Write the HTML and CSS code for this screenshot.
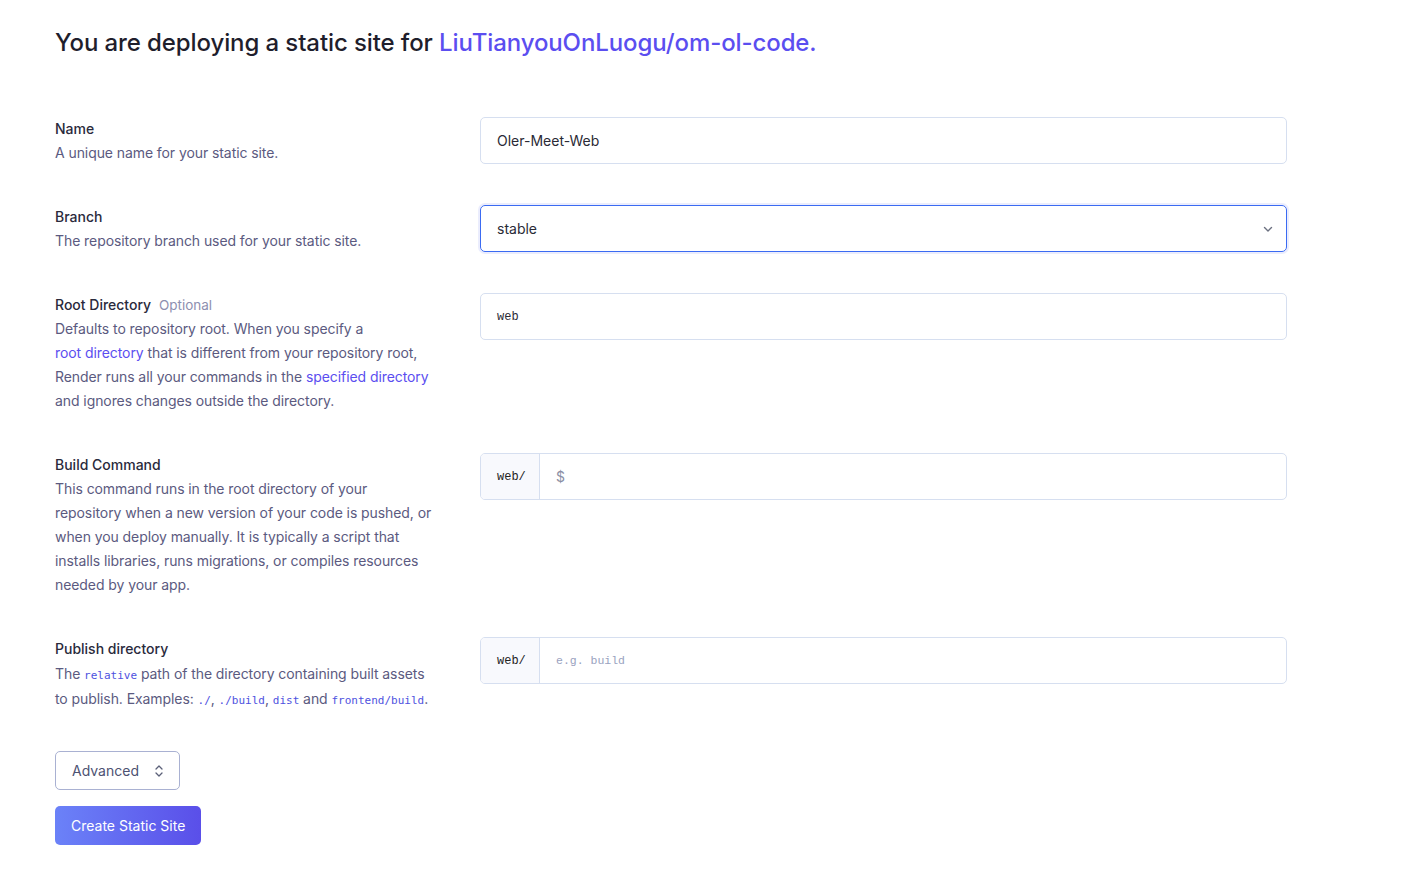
FILE: index.html
```html
<!DOCTYPE html>
<html lang="en">
<head>
<meta charset="utf-8">
<title>Create Static Site</title>
<link rel="stylesheet" href="styles.css">
</head>
<body>
<main class="page">
  <h1 class="title">You are deploying a static site for <a class="repo" href="#">LiuTianyouOnLuogu/om-ol-code.</a></h1>

  <form class="form">
    <div class="row">
      <div class="info">
        <div class="label">Name</div>
        <div class="desc">A unique name for your static site.</div>
      </div>
      <div class="control">
        <div class="input">Oler-Meet-Web</div>
      </div>
    </div>

    <div class="row">
      <div class="info">
        <div class="label">Branch</div>
        <div class="desc">The repository branch used for your static site.</div>
      </div>
      <div class="control">
        <div class="input select">
          <span>stable</span>
          <svg class="chev" width="12" height="12" viewBox="0 0 12 12"><path d="M2.5 4.5 6 8l3.5-3.5" fill="none" stroke="#6b7080" stroke-width="1.4" stroke-linecap="round" stroke-linejoin="round"/></svg>
        </div>
      </div>
    </div>

    <div class="row">
      <div class="info">
        <div class="label">Root Directory <span class="optional">Optional</span></div>
        <div class="desc">Defaults to repository root. When you specify a <a href="#">root directory</a> that is different from your repository root, Render runs all your commands in the <a href="#">specified directory</a> and ignores changes outside the directory.</div>
      </div>
      <div class="control">
        <div class="input mono">web</div>
      </div>
    </div>

    <div class="row">
      <div class="info">
        <div class="label">Build Command</div>
        <div class="desc">This command runs in the root directory of your repository when a new version of your code is pushed, or when you deploy manually. It is typically a script that installs libraries, runs migrations, or compiles resources needed by your app.</div>
      </div>
      <div class="control">
        <div class="group">
          <span class="prefix">web/</span>
          <span class="field dollar">$</span>
        </div>
      </div>
    </div>

    <div class="row">
      <div class="info">
        <div class="label">Publish directory</div>
        <div class="desc publish">The <code>relative</code> path of the directory containing built assets to publish. Examples: <code>./</code>, <code>./build</code>, <code>dist</code> and <code>frontend/build</code>.</div>
      </div>
      <div class="control">
        <div class="group">
          <span class="prefix">web/</span>
          <span class="field placeholder">e.g. build</span>
        </div>
      </div>
    </div>

    <div class="actions">
      <button type="button" class="advanced">Advanced
        <svg width="12" height="16" viewBox="0 0 12 16"><path d="M3 6 6 3l3 3M3 10l3 3 3-3" fill="none" stroke="#5b6078" stroke-width="1.3" stroke-linecap="round" stroke-linejoin="round"/></svg>
      </button>
      <button type="button" class="create">Create Static Site</button>
    </div>
  </form>
</main>
</body>
</html>
```

FILE: styles.css
```css
* { box-sizing: border-box; }
body {
  margin: 0;
  background: #ffffff;
  font-family: Inter, "Noto Sans", sans-serif;
  color: #2a2a3c;
}
.page {
  padding: 27px 55px 40px 55px;
}
.title {
  margin: 0 0 58px 0;
  font-size: 24px;
  font-weight: 500;
  line-height: 32px;
  letter-spacing: -0.1px;
  color: #1f1e2c;
}
.repo {
  color: #5b4ef0;
  text-decoration: none;
}
.form {
  display: flex;
  flex-direction: column;
}
.row {
  display: flex;
  gap: 47px;
  margin-bottom: 40px;
  width: 1232px;
}
.info {
  width: 378px;
  flex: none;
}
.label {
  font-size: 14px;
  line-height: 24px;
  font-weight: 500;
  color: #2a2a3c;
}
.optional {
  font-weight: 400;
  color: #8d8fb0;
  margin-left: 4px;
  font-size: 13.5px;
}
.desc {
  font-size: 14px;
  line-height: 24px;
  letter-spacing: -0.08px;
  color: #5b5a80;
}
.desc.publish {
  line-height: 25px;
}
.desc a {
  color: #5b4ef0;
  text-decoration: none;
  white-space: nowrap;
}
.desc code {
  font-family: "DejaVu Sans Mono", monospace;
  font-size: 11px;
  line-height: 1;
  letter-spacing: 0;
  color: #4e52e0;
}
.control {
  flex: 1;
}
.input {
  height: 47px;
  border: 1px solid #d6dff0;
  border-radius: 5px;
  padding: 0 16px;
  display: flex;
  align-items: center;
  font-size: 14px;
  color: #2a2a36;
}
.select {
  justify-content: space-between;
  border-color: #3b6bf2;
  box-shadow: 0 0 0 2px rgba(90, 110, 240, 0.12);
  padding-right: 12px;
}
.mono {
  font-family: "Liberation Mono", monospace;
  font-size: 12px;
}
.group {
  height: 47px;
  border: 1px solid #d6dff0;
  border-radius: 5px;
  display: flex;
  align-items: stretch;
  overflow: hidden;
}
.prefix {
  width: 59px;
  background: #f8f9fd;
  border-right: 1px solid #d6dff0;
  display: flex;
  align-items: center;
  padding-left: 16px;
  font-family: "Liberation Mono", monospace;
  font-size: 12px;
  color: #222;
}
.field {
  flex: 1;
  display: flex;
  align-items: center;
  padding-left: 16px;
}
.dollar {
  font-size: 14px;
  color: #8a8ea4;
}
.placeholder {
  font-family: "Liberation Mono", monospace;
  font-size: 11.5px;
  color: #9aa2c0;
  padding-left: 16px;
}
.actions {
  display: flex;
  flex-direction: column;
  align-items: flex-start;
  gap: 16px;
  margin-top: 0;
}
.advanced {
  height: 39px;
  padding: 0 14px 0 16px;
  border: 1px solid #a9b1d2;
  border-radius: 5px;
  background: #fff;
  font-family: Inter, "Noto Sans", sans-serif;
  font-size: 14px;
  color: #4d5272;
  display: flex;
  align-items: center;
  gap: 14px;
}
.create {
  height: 39px;
  padding: 0 16px;
  border: none;
  border-radius: 5px;
  background: linear-gradient(90deg, #6b82f8 0%, #5a4fe9 100%);
  font-family: Inter, "Noto Sans", sans-serif;
  font-size: 14px;
  color: #ffffff;
}
```
